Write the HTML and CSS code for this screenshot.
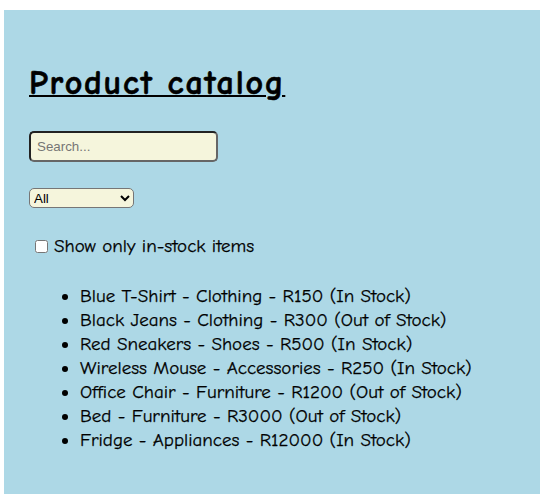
FILE: index.html
```html
<!DOCTYPE html>
<html>
<head>
<meta charset="utf-8">
<link rel="stylesheet" href="styles.css">
</head>
<body>
<div class="app">
  <h1 class="title">Product catalog</h1>
  <div class="field search-field"><input class="search" type="text" placeholder="Search..."></div>
  <div class="field select-field"><select class="filter"><option>All</option><option>Clothing</option><option>Shoes</option><option>Accessories</option><option>Furniture</option><option>Appliances</option></select></div>
  <div class="field check-field"><label class="stock"><input class="check" type="checkbox"><span>Show only in-stock items</span></label></div>
  <ul class="products">
    <li>Blue T-Shirt - Clothing - R150 (In Stock)</li>
    <li>Black Jeans - Clothing - R300 (Out of Stock)</li>
    <li>Red Sneakers - Shoes - R500 (In Stock)</li>
    <li>Wireless Mouse - Accessories - R250 (In Stock)</li>
    <li>Office Chair - Furniture - R1200 (Out of Stock)</li>
    <li>Bed - Furniture - R3000 (Out of Stock)</li>
    <li>Fridge - Appliances - R12000 (In Stock)</li>
  </ul>
</div>
</body>
</html>
```

FILE: styles.css
```css
html, body {
  margin: 0;
  background: #ffffff;
}
.app {
  margin: 10px 0 0 4px;
  padding: 20px 25px 42px 25px;
  background: #add8e6;
  font-family: "Comic Neue", "Comic Sans MS", cursive;
  color: #000;
  -webkit-text-stroke: 0.25px #000;
}
.title {
  font-size: 34px;
  line-height: 38px;
  font-weight: bold;
  letter-spacing: 1.8px;
  -webkit-text-stroke: 0.6px #000;
  text-decoration: underline;
  text-decoration-thickness: 2px;
  margin: 34px 0 29px 0;
}
.field {
  display: flex;
  align-items: center;
}
.search-field {
  margin-bottom: 26px;
}
.select-field {
  margin-bottom: 26px;
}
.search {
  box-sizing: border-box;
  font-family: Arial, "Liberation Sans", sans-serif;
  font-size: 13.33px;
  padding: 0 6px;
  width: 189px;
  height: 31px;
  margin: 0;
  background: #f5f5dc;
  border: 2px solid;
  border-color: #222 #666 #666 #222;
  border-radius: 5px;
  -webkit-text-stroke: 0;
}
.search::placeholder {
  color: #757575;
}
.filter {
  box-sizing: border-box;
  font-family: Arial, "Liberation Sans", sans-serif;
  font-size: 13.33px;
  width: 105px;
  height: 20px;
  margin: 0;
  background: #f5f5dc;
  border: 1px solid #767676;
  border-radius: 5px;
  color: #000;
  -webkit-text-stroke: 0;
}
.stock {
  display: flex;
  align-items: center;
  height: 24px;
  font-size: 19px;
}
.check {
  margin: 0 6px 0 6px;
  width: 13px;
  height: 13px;
}
.products {
  font-size: 19px;
  line-height: 24px;
  padding-left: 51px;
  margin: 26px 0 0 0;
}
```
